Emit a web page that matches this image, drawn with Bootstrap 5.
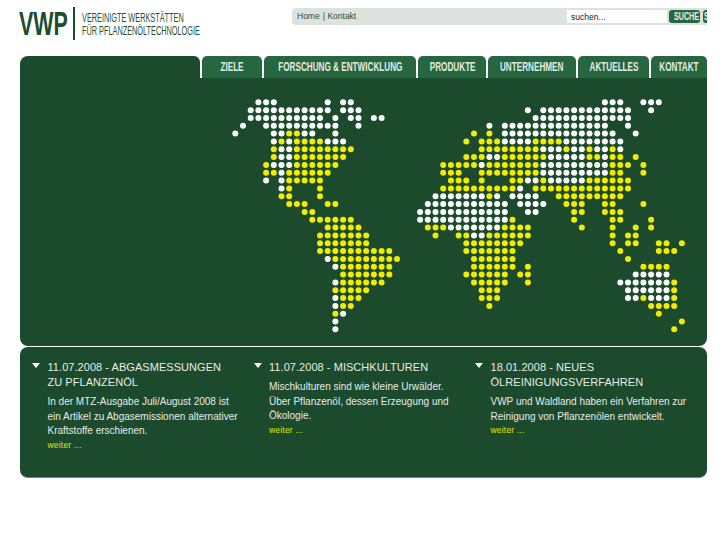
<!DOCTYPE html>
<html lang="de">
<head>
  <meta charset="UTF-8" />
  <title>VWP</title>
  <link href="https://cdn.jsdelivr.net/npm/bootstrap@5.3.3/dist/css/bootstrap.min.css" rel="stylesheet" />
  <style>
    body { background: #fff; font-family: "Liberation Sans", Arial, sans-serif; overflow-x: hidden; }
    .page-wrap { width: 687px; margin-left: 20px; }
    .top-head { height: 56px; }
    .logo-box { width: 272px; margin-left: -1px; padding-top: 7px; color: #1c4d2f; height: 41px; box-sizing: content-box; }
    .logo-mark { width: 54px; font: bold 33px/33px "Liberation Sans", sans-serif; white-space: nowrap; transform: scaleX(.65); transform-origin: left center; }
    .logo-line { width: 2px; height: 33px; flex: none; background: #1c4d2f; margin-right: 7px; }
    .logo-text { padding-top: 5px; color: #1f5135; font: 12px/12.7px "Liberation Sans", sans-serif; white-space: nowrap; transform: scaleX(.61); transform-origin: left top; }
    .meta-bar { width: 415px; height: 17px; margin-top: 8px; background: #dce3dd; border-radius: 4px 0 0 4px; overflow: hidden; padding-left: 5px; font-size: 8.5px; color: #2d4a38; }
    .meta-bar a { color: inherit; text-decoration: none; }
    .meta-sep { margin: 0 2.5px 0 3px; }
    .meta-tools { width: 140px; flex: none; }
    .meta-search { width: 100px; height: 13px; flex: none; padding: 0 4px; margin-right: 2px; border: 0; border-radius: 0; font-size: 8.5px; background: #fff; color: #222; }
    .meta-btn { height: 13px; width: 31px; flex: none; padding: 0; margin-right: 2px; border: 0; border-radius: 3px; background: #26673f; color: #e8efe9; font: bold 10px/13px "Liberation Sans", sans-serif; overflow: hidden; }
    .meta-btn.btn-rest { width: 5px; margin: 0 0 0 1px; border-radius: 3px 0 0 3px; }
    .squeeze-btn { display: inline-block; white-space: nowrap; transform: scaleX(.72); }
    .tab-row { height: 22px; flex-wrap: nowrap; }
    .tab-first { width: 181px; margin-right: 2px; background: #1b4a2c; border-radius: 8px 6px 0 0; }
    .tab-link { display: flex; justify-content: center; height: 22px; padding: 0; background: #26673f; color: #e4ebe5; border-radius: 5px 5px 0 0; font: bold 12px/23px "Liberation Sans", sans-serif; }
    .tab-link:hover { color: #fff; }
    .tab-link span { flex: none; white-space: nowrap; transform: scaleX(.68); }
    .tab-row .nav-item + .nav-item { margin-left: 2px; }
    .tab-w1 { width: 61px; } .tab-w2 { width: 152px; } .tab-w3 { width: 68px; }
    .tab-w4 { width: 88px; } .tab-w5 { width: 71px; } .tab-w6 { width: 56px; }
    .map-panel { height: 268px; background: #1b4a2c; border-radius: 0 0 8px 8px; }
    .map-panel svg { display: block; }
    .news-panel { height: 131px; margin-top: 1px; background: #1b4a2c; border-radius: 8px; padding: 13px 0 0 12px; border-bottom: 1px solid #6f8b78; color: #e7ece8; }
    .news-item { width: 221.5px; flex: none; }
    .news-arrow { width: 0; height: 0; flex: none; margin: 3px 7.5px 0 0; border-left: 4.5px solid transparent; border-right: 4.5px solid transparent; border-top: 5px solid #fff; }
    .news-body { white-space: nowrap; }
    .news-title { font-size: 11px; line-height: 15px; letter-spacing: .05px; font-weight: 400; margin: 0 0 5px; }
    .news-text { font-size: 10px; line-height: 14.6px; margin: 0; }
    .news-more { display: block; margin-top: -1px; font-size: 8.5px; line-height: 15px; color: #e0e600; text-decoration: none; letter-spacing: .2px; }
  </style>
</head>
<body>
  <div class="page-wrap">
    <header class="top-head d-flex justify-content-between align-items-start">
      <div class="logo-box d-flex">
        <div class="logo-mark">VWP</div>
        <div class="logo-line"></div>
        <div class="logo-text">VEREINIGTE WERKSTÄTTEN<br />FÜR PFLANZENÖLTECHNOLOGIE</div>
      </div>
      <div class="meta-bar d-flex align-items-center">
        <a href="#">Home</a><span class="meta-sep">|</span><a href="#">Kontakt</a>
        <div class="meta-tools d-flex align-items-center ms-auto">
          <input type="text" class="meta-search" value="suchen..." />
          <button type="button" class="btn meta-btn"><span class="squeeze-btn">SUCHE</span></button>
          <button type="button" class="btn meta-btn btn-rest"><span class="squeeze-btn">S</span></button>
        </div>
      </div>
    </header>

    <ul class="nav tab-row">
      <li class="tab-first"></li>
      <li class="nav-item tab-w1"><a class="nav-link tab-link" href="#"><span>ZIELE</span></a></li>
      <li class="nav-item tab-w2"><a class="nav-link tab-link" href="#"><span>FORSCHUNG &amp; ENTWICKLUNG</span></a></li>
      <li class="nav-item tab-w3"><a class="nav-link tab-link" href="#"><span>PRODUKTE</span></a></li>
      <li class="nav-item tab-w4"><a class="nav-link tab-link" href="#"><span>UNTERNEHMEN</span></a></li>
      <li class="nav-item tab-w5"><a class="nav-link tab-link" href="#"><span>AKTUELLES</span></a></li>
      <li class="nav-item tab-w6"><a class="nav-link tab-link" href="#"><span>KONTAKT</span></a></li>
    </ul>

    <div class="map-panel">
      <svg id="dotmap" width="687" height="268" viewBox="0 0 687 268"></svg>
    </div>

    <section class="news-panel d-flex">
      <article class="news-item d-flex">
        <span class="news-arrow"></span>
        <div class="news-body">
          <h2 class="news-title">11.07.2008 - ABGASMESSUNGEN<br />ZU PFLANZENÖL</h2>
          <p class="news-text">In der MTZ-Ausgabe Juli/August 2008 ist<br />ein Artikel zu Abgasemissionen alternativer<br />Kraftstoffe erschienen.</p>
          <a class="news-more" href="#">weiter ...</a>
        </div>
      </article>
      <article class="news-item d-flex">
        <span class="news-arrow"></span>
        <div class="news-body">
          <h2 class="news-title">11.07.2008 - MISCHKULTUREN</h2>
          <p class="news-text">Mischkulturen sind wie kleine Urwälder.<br />Über Pflanzenöl, dessen Erzeugung und<br />Ökologie.</p>
          <a class="news-more" href="#">weiter ...</a>
        </div>
      </article>
      <article class="news-item d-flex">
        <span class="news-arrow"></span>
        <div class="news-body">
          <h2 class="news-title">18.01.2008 - NEUES<br />ÖLREINIGUNGSVERFAHREN</h2>
          <p class="news-text">VWP und Waldland haben ein Verfahren zur<br />Reinigung von Pflanzenölen entwickelt.</p>
          <a class="news-more" href="#">weiter ...</a>
        </div>
      </article>
    </section>
  </div>

  <script src="https://cdn.jsdelivr.net/npm/bootstrap@5.3.3/dist/js/bootstrap.bundle.min.js"></script>
  <script>
    // one entry per map row: w = white, y = yellow, then column or column range
    const rows = [
      "w3-5 w12 w14-15 w48-50 w53-55",
      "w2-12 w14-16 w38 w40-51 w54",
      "w2-11 w13 w15-16 w18-19 w39-51",
      "w1 w4-13 w16 w33 w35-48 w51",
      "w0 w5-6 y7-8 w9-10 w13 y31 y33 w35-49 w52",
      "w5 y6 w7 y8-11 w12-14 y30 y32-34 w35-38 y39-42 w43-50",
      "y5 w6-7 y8-15 y32-39 w40-42 y43 w44-45 y46 w47-48 y49 w50",
      "y5 w6-7 y8-14 y30-32 w33-34 y35-40 w41-45 y46-47 w48 y49-50 y52",
      "y4 w5-7 y8-13 y27-31 w32 y33-39 w40-48 y49-51 y53",
      "y4-5 w6 y7-12 y27-29 y32-39 w40-48 y49-50 y53",
      "w4 w6 y7-11 y28-30 y32 y36-37 w38-39 y40 w41-45 y46-51",
      "w6 y7 y11 y27-36 w37 y39-51",
      "y6-7 y11 w26-32 y33 w34 w36-39 y42-50",
      "y7-9 y12-13 w25-35 w37-40 y43-45 y48-49 y53",
      "y9-10 w24-35 w38-39 y44-45 y48-50",
      "y10-15 w24-35 y36 y44 y49-50 y54",
      "y12-16 y25-27 w28-34 y35-38 y45 y49 y52 y54",
      "y11-17 y26 y29-30 w31-32 y33-38 y49 y51-52",
      "y11-17 y30-37 y49 y51-52 y55-56 y58",
      "y11-20 y30-36 y50 y55-57",
      "w12 y13-21 y31-36 y51",
      "w13 y14-20 y31-36 y38 y53-56",
      "y14-20 y30-35 y37-38 w52-56",
      "w13 y14-19 y31-35 y38 w50-56 y57",
      "y13-17 y32-34 w51-56 y57",
      "w13 y14-16 y32-34 w51-52 y53 w54-56 y57",
      "w13 y14-15 y33 y54-57",
      "y13 w14 y55",
      "w13 y58",
      "w13 y57"
    ];
    const svg = document.getElementById("dotmap");
    const ns = "http://www.w3.org/2000/svg";
    rows.forEach((row, r) => {
      row.split(" ").forEach((run) => {
        const fill = run[0] === "w" ? "#ffffff" : "#f2ec00";
        const [from, to] = run.slice(1).split("-").map(Number);
        for (let c = from; c <= (to === undefined ? from : to); c++) {
          const dot = document.createElementNS(ns, "circle");
          dot.setAttribute("cx", 215.3 + 7.7 * c);
          dot.setAttribute("cy", 24.3 + 7.83 * r);
          dot.setAttribute("r", 3);
          dot.setAttribute("fill", fill);
          svg.appendChild(dot);
        }
      });
    });
  </script>
</body>
</html>
